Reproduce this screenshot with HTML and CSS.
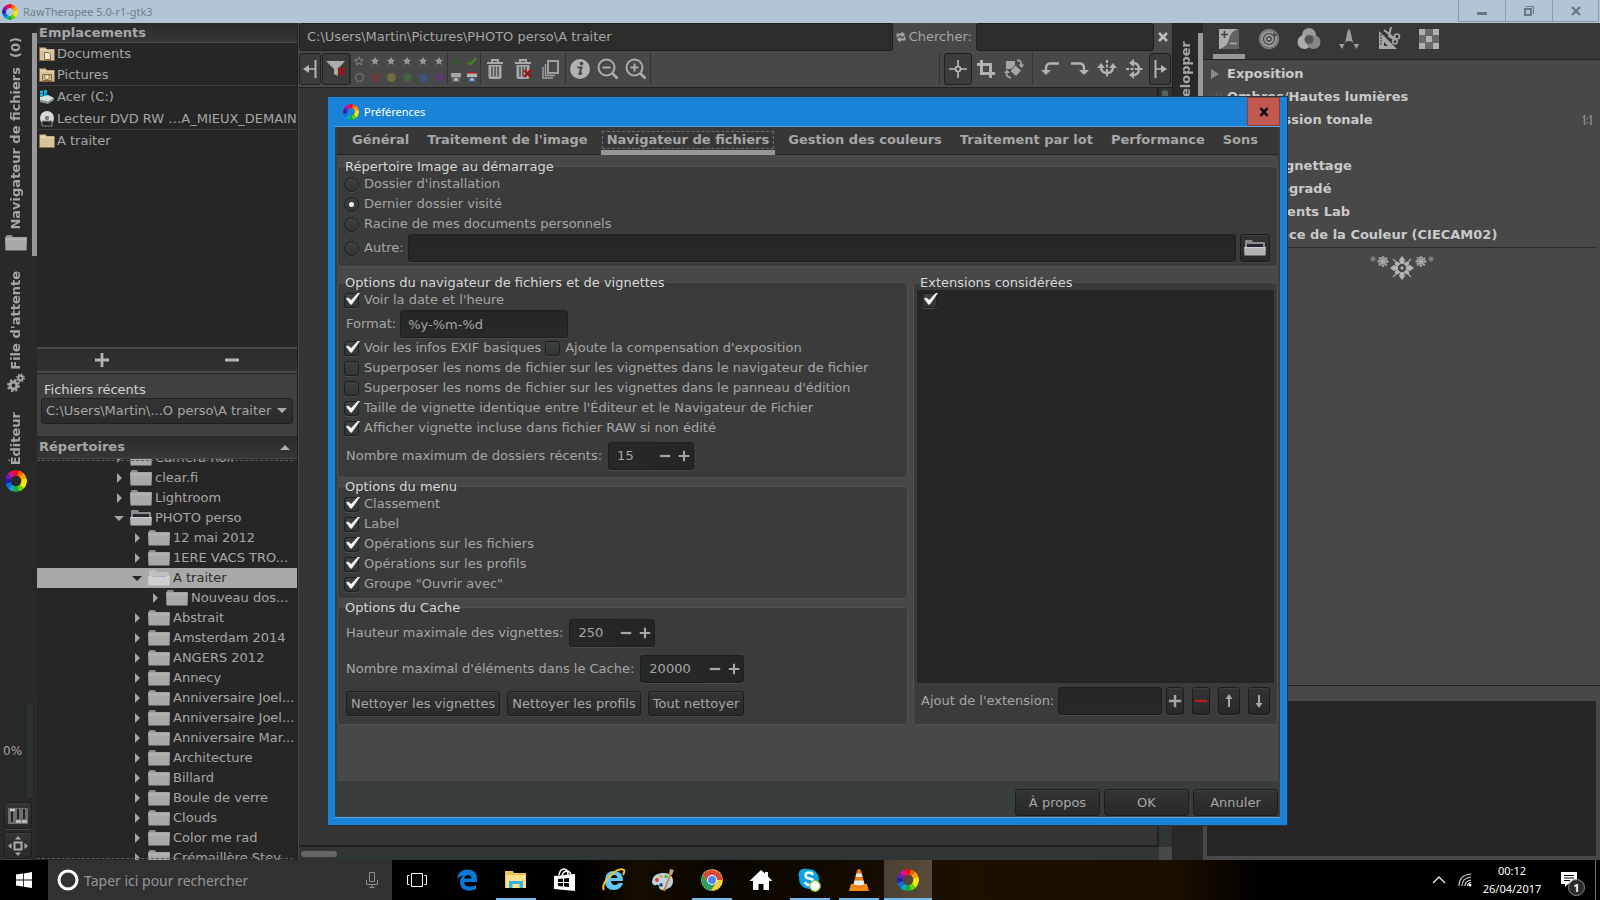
FILE: index.html
```html
<!DOCTYPE html>
<html lang="fr">
<head>
  <meta charset="UTF-8">
  <meta name="viewport" content="width=device-width, initial-scale=1.0">
  <title>RawTherapee 5.0-r1-gtk3</title>
  <link rel="stylesheet" href="styles.css">
</head>
<body>

<svg class="sprite" aria-hidden="true">
  <symbol id="folder" viewBox="0 0 22 18">
    <path d="M1 3V2q0-1 1-1h5l1 2z" fill="#8c8c8c"/>
    <path d="M0 4q0-1 1-1h20q1 0 1 1l-.5 12.500H.5z" fill="#a9a9a9"/>
    <path d="M1 5.500h20" stroke="#b9b9b9" fill="none"/>
  </symbol>
  <symbol id="folder-open" viewBox="0 0 22 18">
    <path d="M1 9V2q0-1 1-1h6l1 2h11q1 0 1 1v5z" fill="#8c8c8c"/>
    <path d="M3 5h16v3H3z" fill="#25282c"/>
    <path d="M0 8h22l-.5 8.500H.5z" fill="#b4b4b6"/>
    <path d="M1 8.500h20" stroke="#c9cbd3" fill="none"/>
  </symbol>
  <symbol id="folder-light" viewBox="0 0 22 18">
    <path d="M1 9V2q0-1 1-1h6l1 2h11q1 0 1 1v5z" fill="#bfbfbf"/>
    <path d="M0 7h22l-.5 9.500H.5z" fill="#cfcfcf"/>
    <path d="M4 7.500h14" stroke="#a9b1c9" fill="none"/>
  </symbol>
  <symbol id="place" viewBox="0 0 16 16">
    <path d="M.5 14.500v-13h6l1.500 2h7.500v11z" fill="#d8c29c" stroke="#8a6d44"/>
    <path d="M1 4h14" stroke="#f0e2c6"/>
  </symbol>
  <symbol id="plus" viewBox="0 0 16 16"><path d="M8 1v14M1 8h14" stroke="currentColor" stroke-width="2.800"/></symbol>
  <symbol id="minus" viewBox="0 0 16 16"><path d="M1 8h14" stroke="currentColor" stroke-width="3"/></symbol>
  <symbol id="star" viewBox="0 0 10 10"><path d="M5 .8l1.200 2.800 3 .3-2.300 2 .7 3L5 7.300 2.400 8.900l.7-3-2.300-2 3-.3z"/></symbol>
  <symbol id="trash" viewBox="0 0 20 22">
    <path d="M2 5h16M7 4V2h6v2" stroke="#a8a8a8" stroke-width="2" fill="none"/>
    <path d="M3.500 7h13v12q0 2-2 2h-9q-2 0-2-2z" fill="#a8a8a8"/>
    <path d="M7 8.500v10M10 8.500v10M13 8.500v10" stroke="#484848" stroke-width="1.400"/>
  </symbol>
  <symbol id="redx" viewBox="0 0 8 8"><path d="M1 1l6 6M7 1L1 7" stroke="#9c1414" stroke-width="2"/></symbol>
</svg>

<header class="titlebar">
  <span class="wheel wheel-16"></span>
  <h1>RawTherapee 5.0-r1-gtk3</h1>
  <div class="window-buttons">
    <button type="button" aria-label="Réduire"><svg width="12" height="12"><path d="M1 8.500h10" stroke="#6b7883" stroke-width="3"/></svg></button>
    <button type="button" aria-label="Restaurer"><svg width="12" height="12" fill="none" stroke="#6b7883"><path d="M3 1.500h7.500V9" /><path d="M2 4h6v6H2z" stroke-width="2"/></svg></button>
    <button type="button" aria-label="Fermer"><svg width="12" height="12"><path d="M2 2l8 8M10 2l-8 8" stroke="#6b7883" stroke-width="2.200"/></svg></button>
  </div>
</header>

<main class="app">

  <nav class="rail">
    <button type="button" class="rail-tab active"><span>Navigateur de fichiers&nbsp; (0)</span><svg width="22" height="18"><use href="#folder"/></svg></button>
    <button type="button" class="rail-tab"><span>File d'attente</span>
      <svg width="18" height="20" viewBox="0 0 18 20" fill="none" stroke="#a4a4a4">
        <circle cx="6.500" cy="12.500" r="3.400" stroke-width="3"/><circle cx="6.500" cy="12.500" r="5.500" stroke-width="2" stroke-dasharray="2.200 2.120"/>
        <circle cx="13.500" cy="5" r="2.200" stroke-width="2"/><circle cx="13.500" cy="5" r="3.700" stroke-width="1.500" stroke-dasharray="1.500 1.400"/>
      </svg>
    </button>
    <button type="button" class="rail-tab"><span>Éditeur</span><i class="wheel wheel-22"></i></button>
    <div class="rail-bottom">
      <div class="progress"><span>0%</span><div class="progress-bar"></div></div>
      <button type="button" class="btn rail-btn" aria-label="Préférences">
        <svg width="20" height="18"><path d="M0 1h20v16H0z" fill="#6d6d6d"/><path d="M4 3v12M10 2v10M16 2v10" stroke="#222" stroke-width="2"/><path d="M2 3h5M8 14.500h5M14 14.500h5" stroke="#c4c4c4" stroke-width="2.500"/></svg>
      </button>
      <button type="button" class="btn rail-btn" aria-label="Plein écran">
        <svg width="20" height="20" fill="#ababab"><path d="M6.500 6.500h7v7h-7z" fill="none" stroke="#ababab" stroke-width="2"/><path d="M10 0l3 3.500H7zM10 20l3-3.500H7zM0 10l3.500-3v6zM20 10l-3.500-3v6z"/></svg>
      </button>
    </div>
  </nav>

  <aside class="side">
    <h2 class="side-head">Emplacements</h2>
    <ul class="places">
      <li><svg width="16" height="16"><use href="#place"/><path d="M5.500 6.500h4l2 2v5h-6zM7.500 4.500" fill="#efe3cb" stroke="#8a6d44"/></svg>Documents</li>
      <li><svg width="16" height="16"><use href="#place"/><path d="M3.500 7.500h9v6h-9z" fill="none" stroke="#8a6d44"/><circle cx="8" cy="10" r="2.500" fill="#efe3cb" stroke="#8a6d44"/></svg>Pictures</li>
      <li class="sep"><svg width="16" height="16"><path d="M1 8l8-2 6 3-6 4-8-2z" fill="#dcdfe0"/><path d="M1 11l8 2 6-4v2l-6 4-8-2z" fill="#8d9295"/><path d="M1 2l3-.5v3H1zM5 1.300L8 1v3.500H5zM1 5h3v2.500H1zM5 5h3v2H5z" fill="#19b5f0"/></svg>Acer (C:)</li>
      <li><svg width="16" height="16"><circle cx="8" cy="7" r="7" fill="#d5dad6"/><circle cx="8" cy="7" r="2.200" fill="#777"/><path d="M3 10h10v5H3z" fill="#222" stroke="#888"/></svg>Lecteur DVD RW …A_MIEUX_DEMAIN</li>
      <li class="sep"><svg width="16" height="16"><use href="#place"/></svg>A traiter</li>
    </ul>
    <div class="places-actions">
      <button type="button" aria-label="Ajouter"><svg width="16" height="16"><use href="#plus"/></svg></button>
      <button type="button" aria-label="Retirer"><svg width="16" height="16"><use href="#minus"/></svg></button>
    </div>
    <div class="recent">
      <label for="recent">Fichiers récents</label>
      <select id="recent"><option>C:\Users\Martin\...O perso\A traiter</option></select>
    </div>
    <h2 class="side-head dirs-head">Répertoires <i class="tri-up"></i></h2>
    <div class="tree">
      <ul>
        <li class="l0"><i class="tri"></i><svg width="22" height="18"><use href="#folder"/></svg>Camera Roll</li>
        <li class="l0"><i class="tri"></i><svg width="22" height="18"><use href="#folder"/></svg>clear.fi</li>
        <li class="l0"><i class="tri"></i><svg width="22" height="18"><use href="#folder"/></svg>Lightroom</li>
        <li class="l0"><i class="tri open"></i><svg width="22" height="18"><use href="#folder-open"/></svg>PHOTO perso</li>
        <li class="l1"><i class="tri"></i><svg width="22" height="18"><use href="#folder"/></svg>12 mai 2012</li>
        <li class="l1"><i class="tri"></i><svg width="22" height="18"><use href="#folder"/></svg>1ERE VACS TRO...</li>
        <li class="l1 selected"><i class="tri open"></i><svg width="22" height="18"><use href="#folder-light"/></svg>A traiter</li>
        <li class="l2"><i class="tri"></i><svg width="22" height="18"><use href="#folder"/></svg>Nouveau dos...</li>
        <li class="l1"><i class="tri"></i><svg width="22" height="18"><use href="#folder"/></svg>Abstrait</li>
        <li class="l1"><i class="tri"></i><svg width="22" height="18"><use href="#folder"/></svg>Amsterdam 2014</li>
        <li class="l1"><i class="tri"></i><svg width="22" height="18"><use href="#folder"/></svg>ANGERS 2012</li>
        <li class="l1"><i class="tri"></i><svg width="22" height="18"><use href="#folder"/></svg>Annecy</li>
        <li class="l1"><i class="tri"></i><svg width="22" height="18"><use href="#folder"/></svg>Anniversaire Joel...</li>
        <li class="l1"><i class="tri"></i><svg width="22" height="18"><use href="#folder"/></svg>Anniversaire Joel...</li>
        <li class="l1"><i class="tri"></i><svg width="22" height="18"><use href="#folder"/></svg>Anniversaire Mar...</li>
        <li class="l1"><i class="tri"></i><svg width="22" height="18"><use href="#folder"/></svg>Architecture</li>
        <li class="l1"><i class="tri"></i><svg width="22" height="18"><use href="#folder"/></svg>Billard</li>
        <li class="l1"><i class="tri"></i><svg width="22" height="18"><use href="#folder"/></svg>Boule de verre</li>
        <li class="l1"><i class="tri"></i><svg width="22" height="18"><use href="#folder"/></svg>Clouds</li>
        <li class="l1"><i class="tri"></i><svg width="22" height="18"><use href="#folder"/></svg>Color me rad</li>
        <li class="l1"><i class="tri"></i><svg width="22" height="18"><use href="#folder"/></svg>Crémaillère Stev...</li>
      </ul>
    </div>
  </aside>

  <section class="center">
    <div class="pathbar">
      <input type="text" class="path" aria-label="Chemin" value="C:\Users\Martin\Pictures\PHOTO perso\A traiter">
      <svg width="10" height="12" fill="none" stroke="#a8a8a8" stroke-width="1.800"><path d="M1.500 6.500V3.500H6.500M8.500 5.500v3H3.500"/><path d="M5.500 .5l3.500 3-3.500 3zM4.500 5.500L1 8.500l3.500 3z" fill="#a8a8a8" stroke="none"/></svg>
      <label for="search">Chercher:</label>
      <input type="text" class="search" id="search">
      <button type="button" class="flat" aria-label="Effacer"><svg width="12" height="12"><path d="M2 2l8 8M10 2l-8 8" stroke="#bdbdbd" stroke-width="2.600"/></svg></button>
    </div>
    <div class="toolbar">
      <button type="button" class="tool on narrow" aria-label="Panneau gauche"><svg width="16" height="20" fill="none" stroke="#b4b4b4"><path d="M13.500 1v18" stroke-width="2"/><path d="M13 10H5" stroke-width="1.600"/><path d="M1 10l6-4v8z" fill="#b4b4b4" stroke="none"/></svg></button>
      <button type="button" class="tool on" aria-label="Filtre"><svg width="22" height="22"><path d="M1 3h19l-7 8v7l-4-2v-5z" fill="#ababab"/><use href="#redx" x="12" y="9" width="9" height="9"/></svg></button>
      <i class="vsep"></i>
      <div class="marks">
        <svg width="10" height="10" fill="none" stroke="#858585"><use href="#star"/></svg>
        <svg width="10" height="10" fill="#9a9a9a"><use href="#star"/></svg>
        <svg width="10" height="10" fill="#9a9a9a"><use href="#star"/></svg>
        <svg width="10" height="10" fill="#9a9a9a"><use href="#star"/></svg>
        <svg width="10" height="10" fill="#9a9a9a"><use href="#star"/></svg>
        <svg width="10" height="10" fill="#9a9a9a"><use href="#star"/></svg>
        <i class="dot none"></i><i class="dot rose"></i><i class="dot yellow"></i><i class="dot green"></i><i class="dot blue"></i><i class="dot purple"></i>
      </div>
      <i class="vsep"></i>
      <div class="marks two">
        <svg width="10" height="10"><path d="M1 6l2.500 2.500L9 2" fill="none" stroke="#2f5a2a" stroke-width="2"/></svg>
        <svg width="10" height="10"><path d="M1 6l2.500 2.500L9 2" fill="none" stroke="#43851f" stroke-width="2"/></svg>
        <svg width="10" height="10"><path d="M0 1h10v4H0z" fill="#a5a5a5"/><path d="M1 5h8v5H1z" fill="#6c6c6c"/><circle cx="5" cy="7.500" r="1.500" fill="#ccc"/></svg>
        <svg width="10" height="10"><path d="M0 1h10v4H0z" fill="#b5b5b5"/><path d="M0 0h10v1.500H0z" fill="#a32020"/><path d="M1 5h8v5H1z" fill="#446086"/><circle cx="5" cy="7.500" r="1.500" fill="#ccc"/></svg>
      </div>
      <i class="vsep"></i>
      <button type="button" class="tool" aria-label="Corbeille"><svg width="20" height="22"><use href="#trash"/></svg></button>
      <button type="button" class="tool" aria-label="Vider la corbeille"><svg width="20" height="22"><use href="#trash"/><use href="#redx" x="10" y="11" width="9" height="9"/></svg></button>
      <button type="button" class="tool" aria-label="Originaux"><svg width="20" height="20" fill="none" stroke="#a0a0a0"><path d="M7 2h10v12H7z" stroke-width="2"/><path d="M4.500 5v11.500H14M2 8v11h10" stroke-width="1.400"/></svg></button>
      <i class="vsep"></i>
      <button type="button" class="tool" aria-label="Informations"><svg width="20" height="20"><circle cx="10" cy="10" r="10" fill="#b2b2b2"/><circle cx="11.500" cy="4.500" r="1.800" fill="#444"/><path d="M7.500 8.500h4l-2 6.500q1.500 0 2.500-1" fill="none" stroke="#444" stroke-width="2"/></svg></button>
      <button type="button" class="tool" aria-label="Zoom arrière"><svg width="22" height="22" fill="none" stroke="#adadad" stroke-width="2"><circle cx="9.500" cy="9.500" r="8"/><path d="M5.500 9.500h8"/><path d="M15.500 15.500l5 5" stroke-width="2.600"/></svg></button>
      <button type="button" class="tool" aria-label="Zoom avant"><svg width="22" height="22" fill="none" stroke="#adadad" stroke-width="2"><circle cx="9.500" cy="9.500" r="8"/><path d="M5.500 9.500h8M9.500 5.500v8"/><path d="M15.500 15.500l5 5" stroke-width="2.600"/></svg></button>
      <i class="vsep"></i>
      <div class="spacer"></div>
      <i class="vsep"></i>
      <button type="button" class="tool on" aria-label="Main"><svg width="20" height="20" fill="none" stroke="#bcbcbc"><path d="M10 1v6M10 13v6M1 10h6M13 10h6" stroke-width="1.600"/><circle cx="10" cy="10" r="2.500" stroke-width="1.600"/></svg></button>
      <button type="button" class="tool" aria-label="Recadrer"><svg width="20" height="20" fill="none" stroke="#b2b2b2" stroke-width="3"><path d="M5.500 1v13.500H19M1 5.500h13.500V19"/></svg></button>
      <button type="button" class="tool" aria-label="Redresser"><svg width="20" height="20" fill="#a6a6a6"><path d="M2 2h9v8H2z"/><path d="M11.500 6l6 5.500-5.500 6L6 12z" stroke="#484848"/><path d="M13 1.500q4.500-.5 4.500 5M7 18.500q-5 0-4.500-5" fill="none" stroke="#a6a6a6" stroke-width="1.800"/><path d="M14.500 5.500h6l-3 3.500zM0 14h6l-3-3.500z"/></svg></button>
      <i class="vsep"></i>
      <button type="button" class="tool" aria-label="Rotation gauche"><svg width="20" height="20"><path d="M18 4.500H9q-4 0-4 5V12" fill="none" stroke="#b2b2b2" stroke-width="2.400"/><path d="M0 11h10l-5 5z" fill="#b2b2b2"/></svg></button>
      <button type="button" class="tool" aria-label="Rotation droite"><svg width="20" height="20"><path d="M2 4.500h9q4 0 4 5V12" fill="none" stroke="#b2b2b2" stroke-width="2.400"/><path d="M10 11h10l-5 5z" fill="#b2b2b2"/></svg></button>
      <button type="button" class="tool" aria-label="Miroir horizontal"><svg width="20" height="20" fill="none" stroke="#b2b2b2" stroke-width="2"><path d="M10 1v18" stroke-dasharray="3 1.500"/><path d="M4 8q0 6 6 6t6-6" stroke-width="2.400"/><path d="M0 9l4-5 4 5zM12 9l4-5 4 5z" fill="#b2b2b2" stroke="none"/></svg></button>
      <button type="button" class="tool" aria-label="Miroir vertical"><svg width="20" height="20" fill="none" stroke="#b2b2b2" stroke-width="2"><path d="M1 10h18" stroke-dasharray="3 1.500"/><path d="M8 4q6 0 6 6t-6 6" stroke-width="2.400"/><path d="M9 0L4 4l5 4zM9 12l-5 4 5 4z" fill="#b2b2b2" stroke="none"/></svg></button>
      <button type="button" class="tool on narrow" aria-label="Panneau droit"><svg width="16" height="20" fill="none" stroke="#b4b4b4"><path d="M3.500 1v18" stroke-width="2"/><path d="M4 10h7" stroke-width="1.600"/><path d="M15 10L9 6v8z" fill="#b4b4b4" stroke="none"/></svg></button>
    </div>
    <div class="browser">
      <div class="canvas"></div>
      <div class="vscroll"><i></i></div>
      <div class="hscroll"><i></i></div>
      <div class="corner"></div>
    </div>
  </section>

  <nav class="rail rail-right">
    <button type="button" class="rail-tab active"><span>Développer</span></button>
  </nav>

  <aside class="tools">
    <div class="tool-tabs">
      <button type="button" class="active" aria-label="Exposition"><svg width="22" height="22"><path d="M1 1h20v20H1z" fill="#636363"/><path d="M1 1h19q-8 3-9 10t-9 10H1z" fill="#adadad"/><path d="M3 6.500h7M6.500 3v7" stroke="#444" stroke-width="1.600"/><path d="M12 15.500h7" stroke="#adadad" stroke-width="1.600"/></svg></button>
      <button type="button" aria-label="Détails"><svg width="22" height="22" fill="none"><circle cx="11" cy="11" r="9" stroke="#7a7a7a" stroke-width="2.500"/><circle cx="11" cy="11" r="8" fill="#999"/><circle cx="11" cy="11" r="5.500" stroke="#444" stroke-width="1.200"/><circle cx="11" cy="11" r="2" fill="#bbb" stroke="#444" stroke-width="1.500"/><path d="M15 4l4 3-3 2z" fill="#444"/></svg></button>
      <button type="button" aria-label="Couleur"><svg width="24" height="24"><circle cx="12" cy="8" r="7" fill="#9b9b9b"/><circle cx="7.500" cy="15" r="7" fill="#adadad"/><circle cx="16.500" cy="15" r="7" fill="#868686"/><circle cx="12" cy="12.500" r="4.500" fill="#555"/></svg></button>
      <button type="button" aria-label="Ondelettes"><svg width="22" height="22" fill="#9e9e9e"><path d="M11 1q1.500 1 2.500 7t3 8q-2-3-5.500-3t-5.500 3q2-2 3-8T11 1zM1 16h5.500L4 21zM15.500 16H21l-2.500 5z"/></svg></button>
      <button type="button" aria-label="Transformer"><svg width="24" height="24"><path d="M2 4v18h18z" fill="#a6a6a6"/><path d="M7 15v4h4z" fill="#383838"/><path d="M3 8h2M3 11h2M3 14h2M3 17h2" stroke="#383838"/><path d="M7 3l10 8M14 0l-2 9 6 4" stroke="#a6a6a6" stroke-width="2" fill="none"/><circle cx="20" cy="9.500" r="2.500" fill="none" stroke="#a6a6a6" stroke-width="1.600"/><circle cx="18" cy="14.500" r="2.300" fill="none" stroke="#a6a6a6" stroke-width="1.600"/></svg></button>
      <button type="button" aria-label="RAW"><svg width="22" height="22"><path d="M1 1h20v20H1z" fill="#6a6a6a"/><path d="M1 1h6v6H1zM15 1h6v6h-6zM8 8h6v6H8zM1 15h6v6H1zM15 15h6v6h-6z" fill="#b0b0b0"/></svg></button>
    </div>
    <ul class="tool-list">
      <li><i class="tri"></i>Exposition</li>
      <li><svg width="12" height="12" fill="none" stroke="#5c5c5c" stroke-width="1.500"><path d="M3 3a4.500 4.500 0 1 0 6 0M6 1v5"/></svg>Ombres/Hautes lumières</li>
      <li><i></i>Compression tonale<svg class="one" width="12" height="12" stroke="#888" stroke-width="1.600" fill="none"><path d="M1 3l1.500-1v9M7.500 3L9 2v9M5.500 4v1.500M5.500 8v1.500"/></svg></li>
      <li><i></i>Retinex</li>
      <li><i></i>Filtre Vignettage</li>
      <li><i></i>Filtre dégradé</li>
      <li><i></i>Ajustements Lab</li>
      <li><i></i>Apparence de la Couleur (CIECAM02)</li>
    </ul>
    <svg class="ornament" width="66" height="26" fill="none" stroke="#acacac">
      <g fill="#b4b4b4" stroke="none">
        <g id="petals"><path d="M33 1l3 4-1.500 4h-3L30 5zM33 25l3-4-1.500-4h-3L30 21zM21 13l4-3 4 1.500v3L25 16zM45 13l-4-3-4 1.500v3l4 1.500z"/></g>
        <path d="M26 6l4.500 1.500 1 3-3 1-2.500-2zM40 6l-4.500 1.500-1 3 3 1 2.500-2zM26 20l4.500-1.500 1-3-3-1-2.500 2zM40 20l-4.500-1.500-1-3 3-1 2.500 2z"/>
        <circle cx="33" cy="13" r="4" fill="#484848"/>
        <circle cx="33" cy="13" r="1.600"/>
      </g>
      <path d="M24 4l3 3M42 4l-3 3M24 22l3-3M42 22l-3-3" stroke-width="1.200"/>
      <g stroke-width="1.400"><path id="flake" d="M14 1v11M8.500 6.500h11M10 2.500l8 8M18 2.500l-8 8"/><circle cx="14" cy="6.500" r="4" stroke-dasharray="1.600 1.540"/><use href="#flake" x="38"/><circle cx="52" cy="6.500" r="4" stroke-dasharray="1.600 1.540"/></g>
      <path d="M4 1v6M1 4h6M2 2l4 4M6 2L2 6M62 1v6M59 4h6M60 2l4 4M64 2l-4 4" stroke="#8b8b8b"/>
    </svg>
    <div class="profile"><div></div></div>
  </aside>
</main>

<section class="dialog" role="dialog" aria-labelledby="dialog-title">
  <header class="dialog-title">
    <span class="wheel wheel-16"></span>
    <h2 id="dialog-title">Préférences</h2>
    <button type="button" aria-label="Fermer"><svg width="12" height="12"><path d="M2.500 2l7 8M9.500 2l-7 8" stroke="#0a0a0a" stroke-width="2.600"/></svg></button>
  </header>
  <div class="dialog-body">
    <div class="tabs">
      <button type="button">Général</button>
      <button type="button">Traitement de l'image</button>
      <button type="button" class="active"><span>Navigateur de fichiers</span></button>
      <button type="button">Gestion des couleurs</button>
      <button type="button">Traitement par lot</button>
      <button type="button">Performance</button>
      <button type="button">Sons</button>
    </div>

    <div class="page">
      <fieldset class="startup">
        <legend>Répertoire Image au démarrage</legend>
        <label class="check"><input type="radio" name="startup">Dossier d'installation</label>
        <label class="check"><input type="radio" name="startup" checked>Dernier dossier visité</label>
        <label class="check"><input type="radio" name="startup">Racine de mes documents personnels</label>
        <div class="row other">
          <label class="check"><input type="radio" name="startup">Autre:</label>
          <input type="text" class="entry grow" aria-label="Autre dossier">
          <button type="button" class="btn folder-btn" aria-label="Parcourir"><svg width="22" height="18"><use href="#folder-open"/></svg></button>
        </div>
      </fieldset>

      <div class="columns">
        <div class="col-left">
          <fieldset class="options">
            <legend>Options du navigateur de fichiers et de vignettes</legend>
            <label class="check"><input type="checkbox" checked>Voir la date et l'heure</label>
            <div class="row format">
              <label for="format">Format:</label>
              <input type="text" class="entry" id="format" value="%y-%m-%d">
            </div>
            <div class="row exif">
              <label class="check"><input type="checkbox" checked>Voir les infos EXIF basiques</label>
              <label class="check"><input type="checkbox">Ajoute la compensation d'exposition</label>
            </div>
            <label class="check"><input type="checkbox">Superposer les noms de fichier sur les vignettes dans le navigateur de fichier</label>
            <label class="check"><input type="checkbox">Superposer les noms de fichier sur les vignettes dans le panneau d'édition</label>
            <label class="check"><input type="checkbox" checked>Taille de vignette identique entre l'Éditeur et le Navigateur de Fichier</label>
            <label class="check"><input type="checkbox" checked>Afficher vignette incluse dans fichier RAW si non édité</label>
            <div class="row spin-row">
              <label for="recents">Nombre maximum de dossiers récents:</label>
              <span class="spin"><input type="text" id="recents" value="15"><button type="button" aria-label="Moins"><svg width="12" height="12"><use href="#minus"/></svg></button><button type="button" aria-label="Plus"><svg width="12" height="12"><use href="#plus"/></svg></button></span>
            </div>
          </fieldset>

          <fieldset class="menu">
            <legend>Options du menu</legend>
            <label class="check"><input type="checkbox" checked>Classement</label>
            <label class="check"><input type="checkbox" checked>Label</label>
            <label class="check"><input type="checkbox" checked>Opérations sur les fichiers</label>
            <label class="check"><input type="checkbox" checked>Opérations sur les profils</label>
            <label class="check"><input type="checkbox" checked>Groupe "Ouvrir avec"</label>
          </fieldset>

          <fieldset class="cache">
            <legend>Options du Cache</legend>
            <div class="row spin-row">
              <label for="height">Hauteur maximale des vignettes:</label>
              <span class="spin"><input type="text" id="height" value="250"><button type="button" aria-label="Moins"><svg width="12" height="12"><use href="#minus"/></svg></button><button type="button" aria-label="Plus"><svg width="12" height="12"><use href="#plus"/></svg></button></span>
            </div>
            <div class="row spin-row">
              <label for="entries">Nombre maximal d'éléments dans le Cache:</label>
              <span class="spin wide"><input type="text" id="entries" value="20000"><button type="button" aria-label="Moins"><svg width="12" height="12"><use href="#minus"/></svg></button><button type="button" aria-label="Plus"><svg width="12" height="12"><use href="#plus"/></svg></button></span>
            </div>
            <div class="row clean">
              <button type="button" class="btn">Nettoyer les vignettes</button>
              <button type="button" class="btn">Nettoyer les profils</button>
              <button type="button" class="btn">Tout nettoyer</button>
            </div>
          </fieldset>
        </div>

        <fieldset class="extensions">
          <legend>Extensions considérées</legend>
          <div class="ext-list"><label class="check"><input type="checkbox" aria-label="Extension" checked></label></div>
          <div class="row ext-add">
            <label for="ext">Ajout de l'extension:</label>
            <input type="text" class="entry grow" id="ext">
            <button type="button" class="btn slim" aria-label="Ajouter"><svg width="14" height="14"><use href="#plus"/></svg></button>
            <button type="button" class="btn slim remove" aria-label="Supprimer"><svg width="14" height="14"><use href="#minus"/></svg></button>
            <button type="button" class="btn arrow" aria-label="Monter"><svg width="10" height="14"><path d="M5 4v9" stroke="#a8a8a8" stroke-width="2"/><path d="M5 0l3.500 5h-7z" fill="#a8a8a8"/></svg></button>
            <button type="button" class="btn arrow" aria-label="Descendre"><svg width="10" height="14"><path d="M5 1v9" stroke="#a8a8a8" stroke-width="2"/><path d="M5 14l3.500-5h-7z" fill="#a8a8a8"/></svg></button>
          </div>
        </fieldset>
      </div>
    </div>

    <footer class="actions">
      <button type="button" class="btn">À propos</button>
      <button type="button" class="btn">OK</button>
      <button type="button" class="btn">Annuler</button>
    </footer>
  </div>
</section>

<footer class="taskbar">
  <button type="button" class="start" aria-label="Démarrer"><svg width="16" height="16" fill="#fff"><path d="M0 2.500L7 1.500v6H0zM7.800 1.400L16 0v7.500H7.800zM0 8.400h7v6.100l-7-1zM7.800 8.400H16V16l-8.200-1.300z"/></svg></button>
  <div class="cortana">
    <svg width="22" height="22"><circle cx="11" cy="11" r="9" fill="none" stroke="#fff" stroke-width="3"/></svg>
    <input type="text" placeholder="Taper ici pour rechercher" aria-label="Rechercher">
    <svg width="12" height="18" fill="none" stroke="#8f8f8f"><path d="M3.500 1.500h5v9h-5z"/><path d="M.5 9v4.500h11V9M6 14v3M3.500 16.500h5"/></svg>
  </div>
  <button type="button" class="task view" aria-label="Vue des tâches"><svg width="22" height="18" fill="none" stroke="#fff"><path d="M5.500 2.500h11v13h-11z"/><path d="M3.500 4.500h-2v9h2M18.500 4.500h2v9h-2"/></svg></button>
  <button type="button" class="task" aria-label="Edge"><svg width="22" height="22"><path d="M1 10Q2 1 11 .5q9.500 0 10 9V13H8q.5 4.500 6 4.500 3.500 0 6-1.500v4q-3 1.700-7 1.700-8.500-.2-9-8.200 0-4.500 3.500-7Q3 7 1 10zm7-.5h7.500Q15 6 12 6T8 9.500z" fill="#0a78d6"/></svg></button>
  <button type="button" class="task open" aria-label="Explorateur"><svg width="22" height="20"><path d="M0 1h8l1 2h12v15H0z" fill="#e9c25e"/><path d="M1 5h20v13H1z" fill="#fbe08c"/><path d="M4 18v-7h14v7h-3.500v-4h-7v4z" fill="#38b1ea"/></svg></button>
  <button type="button" class="task" aria-label="Store"><svg width="22" height="24"><path d="M0 8l21-2v17L0 21z" fill="#fff"/><path d="M5 7q1-6 5-6t4 6M8 7q2-4 5-4t4 4" fill="none" stroke="#fff" stroke-width="1.500"/><path d="M4 11l5-.5V14H4zM10 10.400l5-.4v4h-5zM4 15h5v3.500L4 18zM10 15h5v4l-5-.5z" fill="#000"/></svg></button>
  <button type="button" class="task" aria-label="Internet Explorer"><svg width="24" height="24"><path d="M12 3q9 0 9 10H9q.5 4 4 4 2.500 0 3.500-2H21q-2 7-9 7-9 0-9-9.500T12 3zM9 10h6.500Q15 7 12.300 7T9 10z" fill="#62c8f2"/><path d="M2 22Q-1 17 8 8T22 2q1 1-1 5" fill="none" stroke="#f0c12c" stroke-width="2"/></svg></button>
  <button type="button" class="task" aria-label="Paint"><svg width="24" height="24"><path d="M1 14Q1 6 11 5t11 7-10 10q-4 0-4-3t-3-2-4-3z" fill="#b9d6e6"/><circle cx="6" cy="12" r="2" fill="#d8433a"/><circle cx="10" cy="8.500" r="1.800" fill="#e9a92e"/><circle cx="15" cy="8.500" r="1.800" fill="#68b04c"/><circle cx="10" cy="17" r="1.800" fill="#263f6a"/><path d="M20 5l-7 18" stroke="#d9822e" stroke-width="2"/><path d="M18 6l1-5 4 1-2 5z" fill="#c8a577"/></svg></button>
  <button type="button" class="task open" aria-label="Chrome"><svg width="22" height="22"><circle cx="11" cy="11" r="10.800" fill="#f9cf38"/><path d="M11 11H21.500A10.800 10.800 0 0 0 2 5.500L6.300 13z" fill="#d6483b"/><path d="M11 11L6.500 13.500 2 5.500A10.800 10.800 0 0 0 10 21.800l5-8z" fill="#29a05b"/><circle cx="11" cy="11" r="5" fill="#fff"/><circle cx="11" cy="11" r="4" fill="#4a86ee"/></svg></button>
  <button type="button" class="task" aria-label="Accueil"><svg width="24" height="22" fill="#fff"><path d="M12 1l4 3.500V3h3v4.500l4.500 4.500H20v9h-5.500v-6h-5v6H4v-9H.5z"/></svg></button>
  <button type="button" class="task open" aria-label="Skype"><svg width="24" height="24"><circle cx="6.500" cy="6.500" r="6" fill="#0aa3e6"/><circle cx="11" cy="11" r="10" fill="#0aa3e6"/><path d="M15 7q-1-2.500-4-2.500-3.500 0-3.500 2.800T11 10.500q4.500.7 4.500 3.500t-4 3q-3.500 0-4.500-3" fill="none" stroke="#fff" stroke-width="2.400"/><circle cx="17" cy="18" r="5.300" fill="#fff" stroke="#7fba2c" stroke-width="1.200"/></svg></button>
  <button type="button" class="task open" aria-label="VLC"><svg width="22" height="24"><path d="M3 16h16l2 7H1z" fill="#f58a12"/><path d="M11 1q1.500 0 2 1.500L17 18q-6 3-12 0L9 2.500Q9.500 1 11 1z" fill="#f07a10"/><path d="M8.500 5.500h5l1 3.500h-7zM6.500 12.500h9l1 4q-5.500 2-11 0z" fill="#e9e9e9"/></svg></button>
  <button type="button" class="task open current" aria-label="RawTherapee"><span class="wheel wheel-22"></span></button>
  <div class="tray">
    <svg width="14" height="10" fill="none" stroke="#e6e6e6" stroke-width="1.400"><path d="M1 8l6-6 6 6"/></svg>
    <svg class="wifi" width="14" height="14" fill="none" stroke="#d2d2d2" stroke-width="1.200"><path d="M1 13Q1 2 13 1M4 13Q4 5 13 4M7 13q0-5 6-6M9.500 13q0-3 3.500-3.500"/><circle cx="12" cy="12" r="1.500" fill="#fff" stroke="none"/></svg>
    <time><span>00:12</span><span>26/04/2017</span></time>
    <button type="button" class="notif" aria-label="Notifications"><svg width="18" height="16"><path d="M1 0h16v12h-9l-3 3v-3H1z" fill="#fff"/><path d="M4 3.500h10M4 6h10M4 8.500h6" stroke="#000"/></svg><b>1</b></button>
    <i class="peek"></i>
  </div>
</footer>

</body>
</html>
```
FILE: styles.css
```css
* {
  box-sizing: border-box;
}

body {
  margin: 0;
  height: 100vh;
  display: flex;
  flex-direction: column;
  overflow: hidden;
  background: #484848;
  color: #a6a6a6;
  font-family: "DejaVu Sans", sans-serif;
  font-size: 13px;
  line-height: 16px;
}

button, input, select {
  font: inherit;
  color: inherit;
  margin: 0;
  padding: 0;
  border: 0;
  background: none;
  min-width: 0;
}

button {
  display: flex;
  align-items: center;
  justify-content: center;
}

svg {
  flex: none;
  display: block;
}

ul {
  list-style: none;
  margin: 0;
  padding: 0;
}

h1, h2 {
  margin: 0;
  font-size: 13px;
}

.sprite {
  display: none;
}

.wheel {
  flex: none;
  border-radius: 50%;
  background: conic-gradient(from -15deg, #f01010 0 30deg, #f86010 0 60deg, #fba010 0 90deg, #fbe010 0 120deg, #e8f000 0 150deg, #6ccc10 0 180deg, #10b030 0 210deg, #10a8c0 0 240deg, #1070d8 0 270deg, #2020b0 0 300deg, #701cb0 0 330deg, #d81090 0);
  mask: radial-gradient(circle closest-side, transparent 44%, #000 52%);
}

.wheel-16 {
  width: 16px;
  height: 16px;
}

.wheel-22 {
  width: 22px;
  height: 22px;
}

/* main window */

.titlebar {
  height: 23px;
  flex: none;
  display: flex;
  align-items: center;
  padding-left: 2px;
  background: #b1c5d7;
}

.titlebar h1 {
  margin-left: 5px;
  flex: 1;
  font: 11px/16px "Noto Sans", sans-serif;
  color: #72808d;
}

.window-buttons {
  display: flex;
  align-self: flex-start;
  margin-right: 1px;
}

.window-buttons button {
  width: 47px;
  height: 22px;
  border: 1px solid #8b9bab;
  border-top: 0;
  border-right: 0;
}

.window-buttons button:last-child {
  border-right: 1px solid #8b9bab;
}

.app {
  flex: 1;
  min-height: 0;
  display: flex;
}

.rail {
  width: 37px;
  flex: none;
  display: flex;
  flex-direction: column;
  gap: 11px;
  padding-top: 10px;
  background: #292929;
}

.rail-tab {
  flex-direction: column;
  gap: 4px;
  padding: 4px 0;
  border-right: 5px solid transparent;
  font-weight: bold;
}

.rail-tab.active {
  border-color: #989898;
}

.rail-tab span {
  writing-mode: vertical-rl;
  transform: rotate(180deg);
}

.rail-bottom {
  margin-top: auto;
  display: flex;
  flex-direction: column;
  gap: 3px;
  padding: 0 0 1px 4px;
}

.progress {
  display: flex;
  align-items: center;
  font-size: 12px;
}

.progress span {
  width: 22px;
  margin-left: -1px;
}

.progress-bar {
  width: 9px;
  height: 97px;
  border: 1px solid #1e2222;
  border-radius: 3px;
  background: #2b3231;
}

.btn {
  border: 1px solid #1c1e1e;
  border-radius: 3px;
  background: linear-gradient(#343434, #292929);
  box-shadow: inset 0 1px #3f3f3f, 0 1px #464646;
}

.rail-btn {
  width: 28px;
  height: 27px;
}

.rail-right {
  width: 31px;
  border-left: 1px solid #232323;
}

.rail-right .rail-tab {
  padding: 8px 0;
}

.side {
  width: 261px;
  flex: none;
  display: flex;
  flex-direction: column;
  background: #404040;
  border-right: 1px solid #202020;
}

.side-head {
  height: 20px;
  flex: none;
  display: flex;
  align-items: center;
  justify-content: space-between;
  padding: 0 7px 0 2px;
  background: linear-gradient(#2b2b2b, #363636);
  border-bottom: 1px solid #454b4b;
}

.places {
  height: 304px;
  background: #262626;
}

.places li {
  height: 21px;
  display: flex;
  align-items: center;
  gap: 2px;
  padding-left: 2px;
  white-space: nowrap;
}

.places .sep {
  height: 23px;
  border-top: 1px solid #3c3c3c;
}

.places-actions {
  height: 26px;
  display: flex;
  border: solid #4b4b4b;
  border-width: 2px 0;
  background: linear-gradient(#2b2b2b, #333);
}

.places-actions button {
  flex: 1;
  color: #b4b4b4;
}

.recent {
  position: relative;
  height: 63px;
  border-top: 1px solid #222;
  padding: 8px 4px 0;
}

.recent label {
  display: block;
  padding-left: 3px;
  color: #d2d2d2;
}

.recent select {
  appearance: none;
  width: 100%;
  height: 26px;
  padding-left: 4px;
  border: 1px solid #202020;
  border-radius: 3px;
  background: linear-gradient(#333, #2b2b2b);
}

.recent::after {
  content: "";
  position: absolute;
  right: 10px;
  top: 34px;
  border: 5px solid transparent;
  border-top-color: #ababab;
  border-bottom: 0;
}

.dirs-head {
  height: 23px;
}

.tri-up {
  border: 5px solid transparent;
  border-bottom-color: #b0b0b0;
  border-top: 0;
}

.tree {
  flex: 1;
  min-height: 0;
  overflow: hidden;
  position: relative;
  background: #262626;
}

.tree::before,
.tree::after {
  content: "";
  position: absolute;
  left: 0;
  right: 4px;
  top: 1px;
  border-top: 1px dashed #5d5d5d;
}

.tree::after {
  top: auto;
  bottom: 1px;
}

.tree ul {
  margin-top: -11px;
}

.tree li {
  height: 20px;
  display: flex;
  align-items: center;
  white-space: nowrap;
}

.tree svg {
  margin-right: 3px;
}

.tri {
  width: 13px;
  flex: none;
  display: flex;
}

.tri::before {
  content: "";
  border: 5px solid transparent;
  border-left: 5px solid #a4a4a4;
  border-right: 0;
}

.tri.open::before {
  margin-left: -3px;
  border: 5px solid transparent;
  border-top: 5px solid #a4a4a4;
  border-bottom: 0;
}

.l0 {
  padding-left: 80px;
}

.l1 {
  padding-left: 98px;
}

.l2 {
  padding-left: 116px;
}

.tree .selected {
  background: #a8a8a8;
  color: #2a2a2a;
}

.selected .tri.open::before {
  border-top-color: #262626;
}

/* file browser */

.center {
  flex: 1;
  min-width: 0;
  display: flex;
  flex-direction: column;
  padding-left: 1px;
}

.pathbar {
  height: 28px;
  display: flex;
  align-items: center;
}

.pathbar input {
  height: 28px;
  padding-bottom: 2px;
  border: 1px solid #1f1f1f;
  border-radius: 3px;
  background: #2c2c2c;
}

.pathbar .path {
  flex: 1;
  padding-left: 7px;
  margin-right: 3px;
}

.pathbar label {
  margin: 0 4px 0 3px;
}

.search {
  width: 178px;
}

.flat {
  width: 18px;
}

.toolbar {
  height: 37px;
  display: flex;
  align-items: center;
  border-bottom: 1px solid #222;
}

.tool {
  width: 28px;
  height: 32px;
}

.tool.on {
  border: 1px solid #202020;
  border-radius: 3px;
  background: #3c3c3c;
}

.tool.narrow {
  width: 22px;
  margin-right: 1px;
}

.vsep {
  width: 1px;
  height: 32px;
  background: #323232;
}

.marks {
  display: grid;
  grid-template-columns: repeat(6, 16px);
  grid-auto-rows: 16px;
  place-items: center;
}

.marks.two {
  grid-template-columns: repeat(2, 16px);
}

.dot {
  width: 9px;
  height: 9px;
  border-radius: 50%;
}

.none { border: 1px solid #808080; }
.rose { background: #6c3c3c; }
.yellow { background: #726c3c; }
.green { background: #45603f; }
.blue { background: #3c5578; }
.purple { background: #563c6c; }

.spacer {
  flex: 1;
}

.spacer ~ .vsep {
  margin: 0 4px;
}

.browser {
  flex: 1;
  display: grid;
  grid-template-columns: 1fr 13px;
  grid-template-rows: 1fr 13px;
}

.canvas {
  background: #353535;
  border: solid #222;
  border-width: 0 2px 2px 0;
}

.vscroll {
  background: #303636;
}

.vscroll i {
  display: block;
  width: 6px;
  height: 420px;
  margin: 2px 0 0 3px;
  border-radius: 3px;
  background: #5c6262;
}

.hscroll {
  background: #303636;
}

.hscroll i {
  display: block;
  width: 36px;
  height: 6px;
  margin: 4px 0 0 2px;
  border-radius: 3px;
  background: #666;
}

/* tool panel */

.tools {
  width: 397px;
  flex: none;
  display: flex;
  flex-direction: column;
}

.tool-tabs {
  height: 37px;
  display: flex;
  gap: 8px;
  padding-left: 10px;
  background: #383838;
  border-bottom: 1px solid #222;
}

.tool-tabs button {
  width: 32px;
  border-bottom: 5px solid transparent;
}

.tool-tabs .active {
  border-color: #989898;
}

.tool-list {
  margin: 0 3px 0 0;
  padding: 2px 0 1px 8px;
  border-bottom: 1px solid #2c2c2c;
  font-weight: bold;
  color: #cacaca;
}

.tool-list li {
  height: 23px;
  display: flex;
  align-items: center;
}

.tool-list li > :first-child {
  width: 12px;
  margin-right: 4px;
}

.tool-list .tri::before {
  border-left: 8px solid #888;
}

.tool-list .one {
  margin: 0 3px 0 auto;
}

.ornament {
  margin: 7px auto 0;
}

.profile {
  margin-top: auto;
  border-top: 1px solid #222;
  padding: 15px 4px 4px;
}

.profile div {
  height: 155px;
  background: #262626;
}

/* preferences dialog */

.dialog {
  position: absolute;
  left: 328px;
  top: 97px;
  width: 959px;
  height: 728px;
  display: flex;
  flex-direction: column;
  padding: 0 7px 7px;
  background: #1a83d8;
  box-shadow: 0 0 0 1px #2a3540;
}

.dialog-title {
  height: 29px;
  display: flex;
  align-items: center;
  padding-left: 8px;
}

.dialog-title h2 {
  flex: 1;
  margin-left: 5px;
  font: 11px/16px "Noto Sans", sans-serif;
  color: #fff;
}

.dialog-title button {
  width: 33px;
  height: 29px;
  background: #c1594f;
  border: 1px solid #8a3f3c;
}

.dialog-body {
  flex: 1;
  display: flex;
  flex-direction: column;
  padding: 0 2px;
  border: solid #5aa6e0;
  border-width: 1px 0;
  background: #383e3e;
}

.tabs {
  height: 28px;
  display: flex;
  gap: 8px;
  padding-left: 10px;
  background: #373737;
  border-bottom: 1px solid #222;
}

.tabs button {
  padding: 3px 5px 0;
  border-bottom: 4px solid transparent;
  font-weight: bold;
}

.tabs .active {
  margin-bottom: -1px;
  padding: 3px 2px 0;
  border-bottom: 5px solid #989898;
}

.tabs .active span {
  padding: 0 4px;
  outline: 1px dashed #6e6e6e;
}

.page {
  flex: 1;
  padding-top: 4px;
  background: #484848;
}

fieldset {
  min-width: 0;
  margin: 0;
  padding: 0 6px 4px;
  border: 1px solid #525252;
  border-radius: 4px;
  background: #3b3b3b;
}

legend {
  height: 15px;
  margin-left: 1px;
  padding: 0;
  color: #d8d8d8;
}

.row {
  display: flex;
  align-items: center;
}

.check {
  height: 20px;
  display: flex;
  align-items: center;
  gap: 5px;
  white-space: nowrap;
}

.check input {
  appearance: none;
  position: relative;
  width: 15px;
  height: 15px;
  flex: none;
  border: 1px solid #1d2020;
  border-radius: 3px;
  background: linear-gradient(#3b4342, #2f3635);
  box-shadow: 0 1px #4a4a4a;
}

.check input[type="radio"] {
  border-radius: 50%;
}

.check input[type="radio"]:checked::after {
  content: "";
  position: absolute;
  left: 4px;
  top: 4px;
  width: 5px;
  height: 5px;
  border-radius: 50%;
  background: #eee;
}

.check input[type="checkbox"]:checked::after {
  content: "";
  position: absolute;
  left: 1px;
  top: -1px;
  width: 14px;
  height: 12px;
  background: #f2f2f2;
  clip-path: polygon(0 50%, 16% 42%, 37% 62%, 84% 4%, 100% 4%, 42% 100%, 30% 100%);
}

.entry {
  height: 28px;
  padding: 0 7px;
  border: 1px solid #1d2020;
  border-radius: 3px;
  background: linear-gradient(#232625, #292929);
  box-shadow: 0 1px #4a4a4a;
}

.grow {
  flex: 1;
}

.other {
  gap: 4px;
  padding-right: 1px;
}

.folder-btn {
  width: 30px;
  height: 28px;
}

.columns {
  display: flex;
  gap: 5px;
  margin-top: 8px;
}

.col-left {
  width: 571px;
}

.options {
  padding-bottom: 7px;
}

.menu,
.cache {
  margin-top: 1px;
}

.format {
  gap: 4px;
  padding-left: 2px;
}

.format .entry {
  width: 168px;
}

.exif {
  gap: 4px;
}

.spin-row {
  gap: 6px;
  margin-top: 4px;
  padding-left: 2px;
}

.spin {
  width: 86px;
  height: 28px;
  display: flex;
  border: 1px solid #1d2020;
  border-radius: 3px;
  background: #262828;
  box-shadow: 0 1px #4a4a4a;
}

.spin.wide {
  width: 104px;
}

.spin input {
  flex: 1;
  padding-left: 8px;
}

.spin button {
  width: 19px;
  background: #252525;
}

.cache {
  padding-bottom: 8px;
}

.cache .spin-row + .spin-row {
  margin-top: 8px;
}

.clean {
  gap: 7px;
  margin-top: 8px;
  padding-left: 2px;
}

.clean .btn {
  height: 25px;
  padding: 0 4px;
}

.extensions {
  flex: 1;
  padding: 0 3px 8px;
}

.extensions legend {
  margin-left: 3px;
}

.ext-list {
  height: 393px;
  padding-left: 5px;
  background: #262626;
}

.ext-add {
  gap: 8px;
  margin-top: 4px;
  padding: 0 4px;
}

.ext-add label,
.ext-add .entry {
  margin-right: -4px;
}

.ext-add .btn {
  height: 28px;
}

.slim {
  width: 18px;
}

.remove {
  color: #b32222;
}

.arrow {
  width: 22px;
}

.actions {
  display: flex;
  justify-content: flex-end;
  gap: 4px;
  padding: 8px 0 1px;
}

.actions .btn {
  width: 85px;
  height: 27px;
}

/* windows taskbar */

.taskbar {
  height: 40px;
  flex: none;
  display: flex;
  gap: 1px;
  background: linear-gradient(90deg, #000 580px, #150d00 640px, #090500 720px, #1c1000 960px, #1a0e00 1180px, #000 1260px);
}

.start {
  width: 48px;
  margin-right: -1px;
}

.cortana {
  width: 344px;
  display: flex;
  align-items: center;
  gap: 5px;
  padding: 0 14px 0 9px;
  background: #313131;
  margin-right: -1px;
}

.cortana input {
  flex: 1;
  padding-top: 1px;
  font: 14px/20px "Noto Sans", sans-serif;
}

.cortana input::placeholder {
  color: #959595;
}

.task {
  width: 48px;
  position: relative;
}

.task.view {
  width: 50px;
}

.task.open::after {
  content: "";
  position: absolute;
  left: 4px;
  right: 4px;
  bottom: 0;
  height: 2px;
  background: #76b9ed;
}

.task.current {
  background: linear-gradient(90deg, #4a4135, #5a4a38);
}

.task.current::after {
  left: 0;
  right: 0;
}

.tray {
  margin-left: auto;
  display: flex;
  align-items: center;
}

.wifi {
  margin: 0 10px 0 12px;
}

time {
  width: 60px;
  display: flex;
  flex-direction: column;
  align-items: center;
  font: 11px/18px "Noto Sans", sans-serif;
  color: #fff;
}

.notif {
  position: relative;
  width: 53px;
  height: 40px;
}

.notif b {
  position: absolute;
  left: 26px;
  top: 19px;
  width: 17px;
  height: 17px;
  border: 1px solid #8a8a8a;
  border-radius: 50%;
  background: #2b2b2b;
  color: #fff;
  font: bold 11px/15px "Noto Sans", sans-serif;
}

.peek {
  width: 1px;
  height: 40px;
  margin-right: 4px;
  background: #6b6b6b;
}
```
